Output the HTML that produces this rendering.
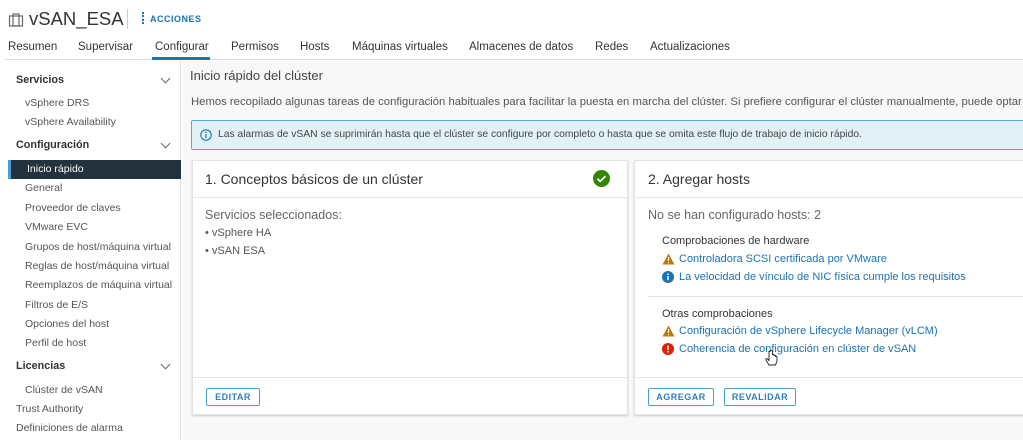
<!DOCTYPE html>
<html><head><meta charset="utf-8"><style>
*{box-sizing:border-box;margin:0;padding:0}
body{width:1023px;height:440px;overflow:hidden;background:#fff;font-family:"Liberation Sans",sans-serif;color:#333;position:relative}
.a{position:absolute;white-space:nowrap}
.side{position:absolute;left:0;top:61px;width:181px;height:379px;background:#fff;border-right:1px solid #ddd}
.main{position:absolute;left:182px;top:61px;width:841px;height:379px;background:#f8f8f8}
.si{position:absolute;left:25px;font-size:10.5px;color:#555}
.sh{position:absolute;left:16px;font-size:10.8px;font-weight:bold;color:#333}
.chev{position:absolute;left:162px;width:7px;height:7px;border-right:1.3px solid #666;border-bottom:1.3px solid #666;transform:rotate(45deg)}
.card{position:absolute;top:160px;height:255px;background:#fff;border:1px solid #e3e3e3;box-shadow:0 1px 2px #ccc}
.hd{position:absolute;left:0;right:0;top:0;height:37px;border-bottom:1px solid #e6e6e6}
.ft{position:absolute;left:0;right:0;top:216px;border-top:1px solid #e6e6e6}
.btn{position:absolute;top:227px;height:18px;border:1px solid #4a9fd0;border-radius:2px;font-size:9px;font-weight:bold;color:#2f7fb8;letter-spacing:.5px;text-align:center;line-height:16px}
.lk{color:#1a73b5;font-size:11px}
</style></head><body>
<svg class="a" style="left:8px;top:12px" width="16" height="16" viewBox="0 0 16 16"><rect x="1.5" y="4" width="13" height="10" fill="none" stroke="#666" stroke-width="1.2"/><rect x="5" y="2" width="6" height="12" fill="none" stroke="#666" stroke-width="1.2"/></svg>
<div class="a" style="left:29px;top:8px;font-size:18.5px;color:#333">vSAN_ESA</div>
<div class="a" style="left:127px;top:9px;width:1px;height:20px;background:#ccc"></div>
<div class="a" style="left:142px;top:12px;width:2px;height:12px;border-left:2px dotted #1a73b5"></div>
<div class="a" style="left:150px;top:14px;font-size:9px;font-weight:bold;color:#1a73b5;letter-spacing:.5px">ACCIONES</div>
<div class="a" style="left:8px;top:41px;font-size:11.5px;color:#333">Resumen</div>
<div class="a" style="left:78px;top:41px;font-size:11.5px;color:#333">Supervisar</div>
<div class="a" style="left:155px;top:41px;font-size:11.5px;color:#333">Configurar</div>
<div class="a" style="left:231px;top:41px;font-size:11.5px;color:#333">Permisos</div>
<div class="a" style="left:300px;top:41px;font-size:11.5px;color:#333">Hosts</div>
<div class="a" style="left:352px;top:41px;font-size:11.5px;color:#333">Máquinas virtuales</div>
<div class="a" style="left:469px;top:41px;font-size:11.5px;color:#333">Almacenes de datos</div>
<div class="a" style="left:595px;top:41px;font-size:11.5px;color:#333">Redes</div>
<div class="a" style="left:650px;top:41px;font-size:11.5px;color:#333">Actualizaciones</div>
<div class="a" style="left:5px;top:59px;width:1018px;height:1px;background:#ddd"></div>
<div class="a" style="left:152px;top:57px;width:58px;height:3px;background:#1a73b5"></div>

<div class="side"></div>
<div class="sh" style="top:74px">Servicios</div><div class="chev" style="top:75px"></div>
<div class="si" style="top:97px">vSphere DRS</div>
<div class="si" style="top:116px">vSphere Availability</div>
<div class="sh" style="top:139px">Configuración</div><div class="chev" style="top:140px"></div>
<div class="a" style="left:8px;top:160px;width:173px;height:19px;background:#23323c;border-left:3px solid #4a9fd0"></div>
<div class="si" style="top:163px;left:27px;color:#fff">Inicio rápido</div>
<div class="si" style="top:182px">General</div>
<div class="si" style="top:202px">Proveedor de claves</div>
<div class="si" style="top:221px">VMware EVC</div>
<div class="si" style="top:241px">Grupos de host/máquina virtual</div>
<div class="si" style="top:260px">Reglas de host/máquina virtual</div>
<div class="si" style="top:279px">Reemplazos de máquina virtual</div>
<div class="si" style="top:299px">Filtros de E/S</div>
<div class="si" style="top:318px">Opciones del host</div>
<div class="si" style="top:337px">Perfil de host</div>
<div class="sh" style="top:360px">Licencias</div><div class="chev" style="top:361px"></div>
<div class="si" style="top:384px">Clúster de vSAN</div>
<div class="si" style="top:403px;left:16px">Trust Authority</div>
<div class="si" style="top:422px;left:16px">Definiciones de alarma</div>

<div class="main"></div>
<div class="a" style="left:190px;top:68px;font-size:13px;color:#444">Inicio rápido del clúster</div>
<div class="a" style="left:191px;top:96px;font-size:11.3px;color:#555">Hemos recopilado algunas tareas de configuración habituales para facilitar la puesta en marcha del clúster. Si prefiere configurar el clúster manualmente, puede optar</div>
<div class="a" style="left:191px;top:120px;width:840px;height:30px;background:#e1f1f6;border:1px solid #49afd9;border-radius:2px"></div>
<svg class="a" style="left:200px;top:129px" width="12" height="12" viewBox="0 0 12 12"><circle cx="6" cy="6" r="5.2" fill="none" stroke="#1a73b5" stroke-width="1.1"/><rect x="5.4" y="5" width="1.2" height="4" fill="#1a73b5"/><circle cx="6" cy="3.4" r=".8" fill="#1a73b5"/></svg>
<div class="a" style="left:218px;top:129px;font-size:10.3px;color:#444">Las alarmas de vSAN se suprimirán hasta que el clúster se configure por completo o hasta que se omita este flujo de trabajo de inicio rápido.</div>

<div class="card" style="left:192px;width:436px">
<div class="hd"></div>
<div class="a" style="left:12px;top:10px;font-size:14px;color:#333">1. Conceptos básicos de un clúster</div>
<svg class="a" style="left:400px;top:9px" width="17" height="17" viewBox="0 0 17 17"><circle cx="8.5" cy="8.5" r="8.5" fill="#318700"/><path d="M4.5 8.7l2.7 2.7 5.3-5.3" fill="none" stroke="#fff" stroke-width="1.8"/></svg>
<div class="a" style="left:12px;top:47px;font-size:12.5px;color:#666">Servicios seleccionados:</div>
<div class="a" style="left:12px;top:66px;font-size:11px;color:#555">• vSphere HA</div>
<div class="a" style="left:12px;top:84px;font-size:11px;color:#555">• vSAN ESA</div>
<div class="ft"></div>
<div class="btn" style="left:13px;width:54px">EDITAR</div>
</div>

<div class="card" style="left:634px;width:400px">
<div class="hd"></div>
<div class="a" style="left:13px;top:10px;font-size:14px;color:#333">2. Agregar hosts</div>
<div class="a" style="left:13px;top:47px;font-size:12.5px;color:#666">No se han configurado hosts: 2</div>
<div class="a" style="left:27px;top:74px;font-size:11px;color:#333">Comprobaciones de hardware</div>
<svg class="a" style="left:27px;top:92px" width="13" height="12" viewBox="0 0 13 12"><path d="M6.5 0.5L12.5 11.5H0.5Z" fill="#c27b00"/><rect x="5.9" y="4" width="1.2" height="4" fill="#fff"/><rect x="5.9" y="9" width="1.2" height="1.2" fill="#fff"/></svg>
<div class="a lk" style="left:44px;top:92px">Controladora SCSI certificada por VMware</div>
<svg class="a" style="left:27px;top:110px" width="12" height="12" viewBox="0 0 12 12"><circle cx="6" cy="6" r="6" fill="#1a73b5"/><rect x="5.3" y="5" width="1.4" height="4.2" fill="#fff"/><circle cx="6" cy="3.3" r=".9" fill="#fff"/></svg>
<div class="a lk" style="left:44px;top:110px">La velocidad de vínculo de NIC física cumple los requisitos</div>
<div class="a" style="left:13px;top:135px;width:390px;height:1px;background:#e3e3e3"></div>
<div class="a" style="left:27px;top:147px;font-size:11px;color:#333">Otras comprobaciones</div>
<svg class="a" style="left:27px;top:164px" width="13" height="12" viewBox="0 0 13 12"><path d="M6.5 0.5L12.5 11.5H0.5Z" fill="#c27b00"/><rect x="5.9" y="4" width="1.2" height="4" fill="#fff"/><rect x="5.9" y="9" width="1.2" height="1.2" fill="#fff"/></svg>
<div class="a lk" style="left:44px;top:164px">Configuración de vSphere Lifecycle Manager (vLCM)</div>
<svg class="a" style="left:27px;top:182px" width="12" height="12" viewBox="0 0 12 12"><circle cx="6" cy="6" r="6" fill="#e02200"/><rect x="5.3" y="2.5" width="1.4" height="4.5" fill="#fff"/><circle cx="6" cy="8.8" r=".9" fill="#fff"/></svg>
<div class="a lk" style="left:44px;top:182px">Coherencia de configuración en clúster de vSAN</div>
<svg class="a" style="left:130px;top:189px" width="13" height="18" viewBox="0 0 13 18"><path d="M4 1.5v9l-1.5-1.5c-1-1-2.3 0-1.5 1l3 5h6.5l1.5-4v-4c0-1-1.5-1-1.5 0v-1c0-1-1.5-1-1.5 0v-1c0-1-1.5-1-1.5 0V1.5c0-1.2-2.5-1.2-2.5 0z" fill="#fff" stroke="#222" stroke-width=".9"/></svg>
<div class="ft"></div>
<div class="btn" style="left:13px;width:66px">AGREGAR</div>
<div class="btn" style="left:89px;width:72px">REVALIDAR</div>
</div>
</body></html>
